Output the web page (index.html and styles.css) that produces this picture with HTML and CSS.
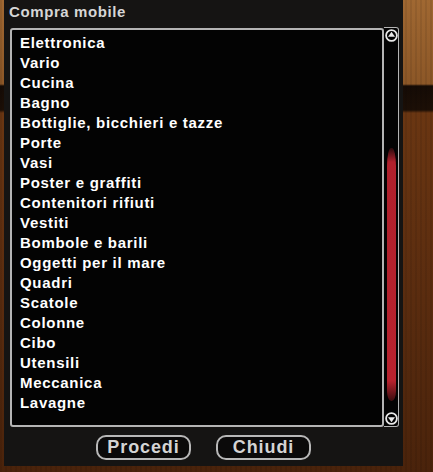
FILE: index.html
```html
<!DOCTYPE html>
<html lang="it">
<head>
  <meta charset="UTF-8">
  <title>Compra mobile</title>
  <link rel="stylesheet" href="styles.css">
</head>
<body>
  <div class="window">
    <div class="title">Compra mobile</div>

    <div class="listbox">
      <ul class="list">
        <li>Elettronica</li>
        <li>Vario</li>
        <li>Cucina</li>
        <li>Bagno</li>
        <li>Bottiglie, bicchieri e tazze</li>
        <li>Porte</li>
        <li>Vasi</li>
        <li>Poster e graffiti</li>
        <li>Contenitori rifiuti</li>
        <li>Vestiti</li>
        <li>Bombole e barili</li>
        <li>Oggetti per il mare</li>
        <li>Quadri</li>
        <li>Scatole</li>
        <li>Colonne</li>
        <li>Cibo</li>
        <li>Utensili</li>
        <li>Meccanica</li>
        <li>Lavagne</li>
      </ul>
      <div class="scrollbar">
        <svg class="arrow" width="13" height="13" viewBox="0 0 13 13">
          <circle cx="6.5" cy="6.5" r="5.4" fill="#000" stroke="#e8e8e8" stroke-width="1.8"/>
          <path d="M6.5 2.8 L10 7.8 L3 7.8 Z" fill="#e8e8e8"/>
        </svg>
        <div class="track">
          <div class="thumb"></div>
        </div>
        <svg class="arrow" width="13" height="13" viewBox="0 0 13 13">
          <circle cx="6.5" cy="6.5" r="5.4" fill="#000" stroke="#e8e8e8" stroke-width="1.8"/>
          <path d="M6.5 10.2 L10 5.2 L3 5.2 Z" fill="#e8e8e8"/>
        </svg>
      </div>
    </div>

    <div class="actions">
      <button class="btn">Procedi</button>
      <button class="btn">Chiudi</button>
    </div>
  </div>
</body>
</html>
```

FILE: styles.css
```css
* {
  margin: 0;
  padding: 0;
  box-sizing: border-box;
}

body {
  width: 433px;
  height: 472px;
  overflow: hidden;
  font-family: "Liberation Sans", Arial, sans-serif;
  background:
    repeating-linear-gradient(90deg, rgba(0,0,0,0.08) 0 2px, transparent 2px 5px),
    linear-gradient(to bottom, #a06832 0, #8c5727 84px, #150b05 86px, #1c0f06 110px, #6a3612 113px, #5a2c0f 300px, #4a230b 472px);
}

.window {
  margin-left: 4px;
  width: 399px;
  height: 466px;
  background: #151413;
  display: flex;
  flex-direction: column;
}

.title {
  height: 24px;
  padding: 3px 0 0 5px;
  font-size: 15px;
  font-weight: bold;
  color: #d6d6d6;
  letter-spacing: 0.6px;
}

.listbox {
  display: flex;
  margin: 4px 0 0 6px;
  width: 389px;
  height: 399px;
}

.list {
  flex: 1;
  list-style: none;
  background: #030303;
  border: 2px solid #b4b4b4;
  border-radius: 3px;
  padding: 3px 0 0 8px;
}

.list li {
  height: 20px;
  line-height: 20px;
  font-size: 15px;
  font-weight: bold;
  color: #fff;
  letter-spacing: 0.7px;
}

.scrollbar {
  width: 15px;
  margin-top: -1px;
  border: 1px solid #b4b4b4;
  border-left: none;
  border-radius: 0 3px 3px 0;
  background: #030303;
  display: flex;
  flex-direction: column;
  align-items: center;
  padding: 1px 0;
}

.arrow {
  flex: none;
}

.track {
  flex: 1;
  width: 100%;
  padding: 106px 2px 11px 2px;
}

.thumb {
  width: 9px;
  height: 100%;
  margin: 0 auto;
  background: linear-gradient(to bottom, #2a0a0c 0, #b0202c 14px, #b8222e 92%, #3a0c0e 100%);
  border-radius: 45% 45% 45% 45% / 18px 18px 10px 10px;
}

.actions {
  display: flex;
  justify-content: center;
  gap: 25px;
  margin-top: 8px;
}

.btn {
  width: 95px;
  height: 25px;
  background: #0b0a0a;
  border: 2px solid #b8b8b8;
  border-radius: 10px;
  color: #d4d4d4;
  font-family: "Liberation Sans", Arial, sans-serif;
  font-size: 18px;
  font-weight: bold;
  letter-spacing: 0.9px;
}
```
